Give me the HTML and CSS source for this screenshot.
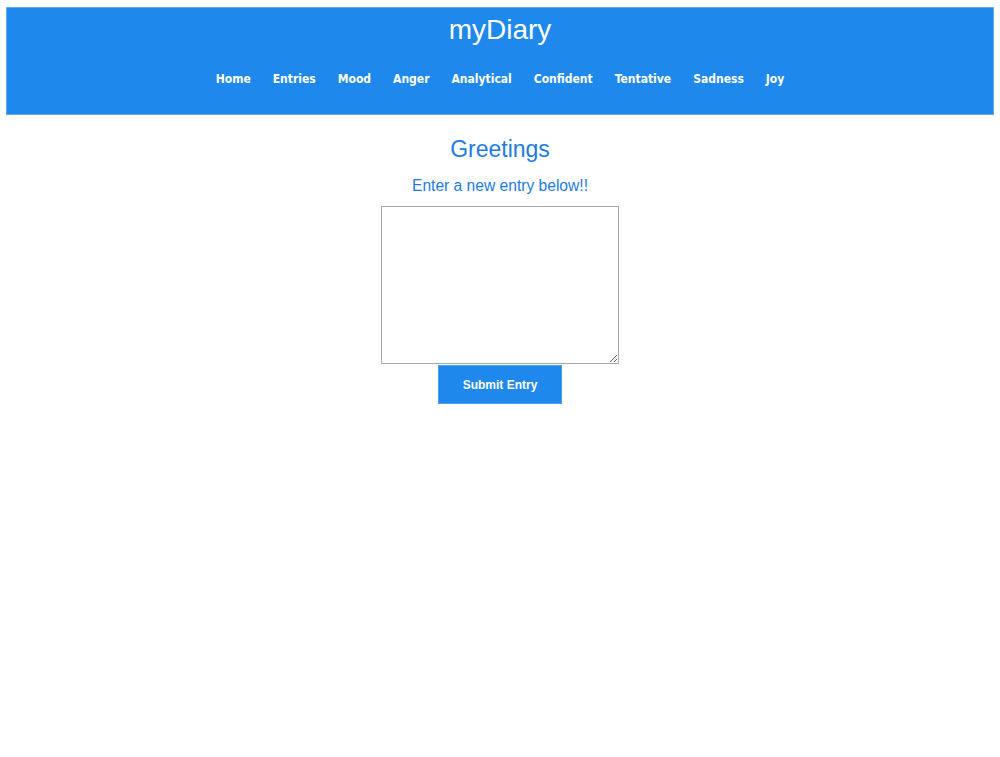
FILE: index.html
```html
<!DOCTYPE html>
<html lang="en">
<head>
<meta charset="utf-8">
<title>myDiary</title>
<link rel="stylesheet" href="styles.css">
</head>
<body>
<header class="site-header">
  <h1 class="brand">myDiary</h1>
  <nav class="nav">
    <a href="#">Home</a>
    <a href="#">Entries</a>
    <a href="#">Mood</a>
    <a href="#">Anger</a>
    <a href="#">Analytical</a>
    <a href="#">Confident</a>
    <a href="#">Tentative</a>
    <a href="#">Sadness</a>
    <a href="#">Joy</a>
  </nav>
</header>
<main class="content">
  <h2 class="greeting">Greetings</h2>
  <p class="prompt">Enter a new entry below!!</p>
  <form class="entry-form">
    <textarea class="entry-text"></textarea>
    <button type="button" class="submit-btn">Submit Entry</button>
  </form>
</main>
</body>
</html>
```

FILE: styles.css
```css
html, body {
  margin: 0;
  padding: 0;
  background: #ffffff;
}

body {
  font-family: "Liberation Sans", Arial, Helvetica, sans-serif;
}

.site-header {
  margin: 7px 6px 0;
  height: 108px;
  box-sizing: border-box;
  background: #1e88ed;
  border: 1px solid #5fa9f2;
  padding-top: 6px;
  display: flex;
  flex-direction: column;
  align-items: center;
}

.brand {
  margin: 0;
  font-size: 28px;
  line-height: 32px;
  font-weight: normal;
  color: #ffffff;
}

.nav {
  margin-top: 26px;
  display: flex;
  justify-content: center;
  gap: 22px;
}

.nav a {
  font-family: "DejaVu Sans Condensed", "DejaVu Sans", Verdana, sans-serif;
  font-stretch: condensed;
  font-weight: bold;
  font-size: 12px;
  line-height: 15px;
  color: #ffffff;
  text-decoration: none;
}

.content {
  display: flex;
  flex-direction: column;
  align-items: center;
}

.greeting {
  margin: 20px 0 0;
  font-size: 23px;
  line-height: 28px;
  font-weight: normal;
  color: #1c7be6;
}

.prompt {
  margin: 14px 0 0;
  font-size: 15.6px;
  line-height: 18px;
  color: #1c7be6;
}

.entry-form {
  margin-top: 11px;
  display: flex;
  flex-direction: column;
  align-items: center;
}

.entry-text {
  width: 238px;
  height: 158px;
  box-sizing: border-box;
  border: 1px solid #a9a9a9;
  margin: 0;
  padding: 2px;
}

.submit-btn {
  margin-top: 1px;
  width: 124px;
  height: 39px;
  box-sizing: border-box;
  background: #1e88ed;
  border: 1px solid #4aa0f0;
  color: #ffffff;
  font-family: "Liberation Sans", Arial, sans-serif;
  font-size: 12px;
  font-weight: bold;
  padding: 0;
}
```
